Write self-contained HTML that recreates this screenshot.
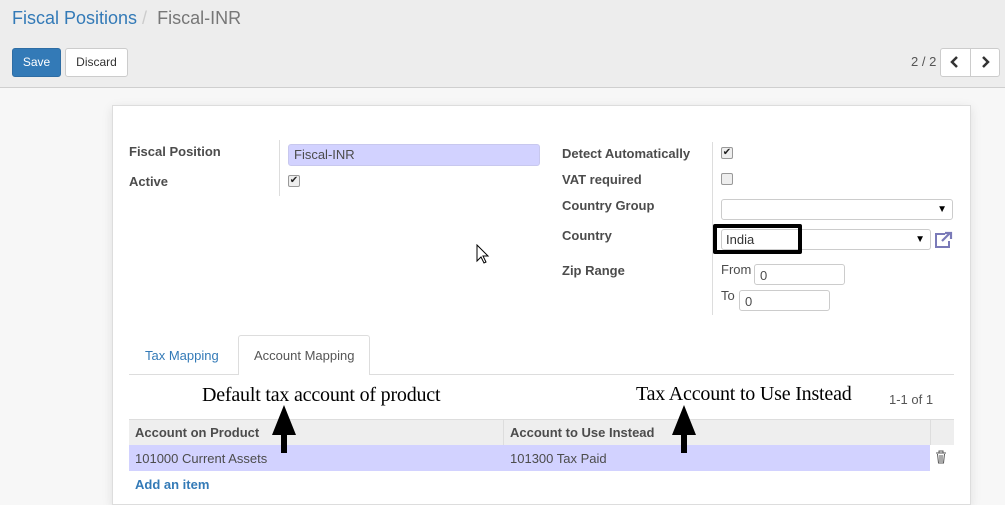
<!DOCTYPE html>
<html><head><meta charset="utf-8"><style>
*{box-sizing:border-box;margin:0;padding:0}
body{width:1005px;height:497px;overflow:hidden;background:#f7f7f7;font-family:"Liberation Sans",sans-serif;font-size:13px;color:#4c4c4c;position:relative}
.a{position:absolute}
.top{left:0;top:0;width:1005px;height:88px;background:#ededed;border-bottom:1px solid #cfcfcf}
.btn{position:absolute;height:29px;border-radius:3px;font-size:12px;line-height:27px;text-align:center}
.sheet{left:112px;top:105px;width:859px;height:400px;background:#fff;border:1px solid #ddd;box-shadow:0 3px 10px rgba(0,0,0,.1)}
.lbl{position:absolute;font-weight:bold;font-size:13px;color:#4c4c4c}
.cb{position:absolute;width:12px;height:12px;border:1px solid #999;border-radius:2px;background:#eee;font-size:10px;line-height:10px;text-align:center;color:#222}
.inp{position:absolute;border:1px solid #ccc;border-radius:3px;background:#fff;font-size:13px;padding-left:5px}
.serif{position:absolute;font-family:"Liberation Serif",serif;font-size:20px;color:#000;letter-spacing:-0.2px}
</style></head><body>
<div class="a top"></div>
<div class="a" style="left:12px;top:8px;font-size:18px;color:#337ab7">Fiscal Positions <span style="color:#ccc">/</span> <span style="color:#777">&nbsp;Fiscal-INR</span></div>
<div class="btn" style="left:12px;top:48px;width:49px;background:#337ab7;color:#fff;border:1px solid #2e6da4">Save</div>
<div class="btn" style="left:65px;top:48px;width:63px;background:#fff;color:#333;border:1px solid #ccc">Discard</div>
<div class="a" style="left:911px;top:54px;font-size:13px;color:#555">2 / 2</div>
<div class="btn" style="left:940px;top:48px;width:60px;height:29px;background:#fff;border:1px solid #ccc"></div>
<div class="a" style="left:970px;top:48px;width:1px;height:29px;background:#ccc"></div>
<svg class="a" style="left:950px;top:56px" width="10" height="12"><path d="M7 1L2 6l5 5" fill="none" stroke="#333" stroke-width="2.5"/></svg>
<svg class="a" style="left:980px;top:56px" width="10" height="12"><path d="M3 1l5 5-5 5" fill="none" stroke="#333" stroke-width="2.5"/></svg>

<div class="a sheet"></div>
<div class="lbl" style="left:129px;top:144px">Fiscal Position</div>
<div class="lbl" style="left:129px;top:174px">Active</div>
<div class="a" style="left:279px;top:140px;width:1px;height:56px;background:#ddd"></div>
<div class="inp" style="left:288px;top:144px;width:252px;height:22px;background:#d2d2ff;border-color:#c8c8ee;line-height:20px">Fiscal-INR</div>
<div class="cb" style="left:288px;top:175px">✔</div>

<div class="lbl" style="left:562px;top:146px">Detect Automatically</div>
<div class="lbl" style="left:562px;top:172px">VAT required</div>
<div class="lbl" style="left:562px;top:198px">Country Group</div>
<div class="lbl" style="left:562px;top:228px">Country</div>
<div class="lbl" style="left:562px;top:263px">Zip Range</div>
<div class="a" style="left:712px;top:142px;width:1px;height:173px;background:#ddd"></div>
<div class="cb" style="left:721px;top:147px">✔</div>
<div class="cb" style="left:721px;top:173px"></div>
<div class="inp" style="left:721px;top:199px;width:232px;height:21px"><span style="position:absolute;right:5px;top:4px;font-size:10px;color:#000">▼</span></div>
<div class="inp" style="left:721px;top:229px;width:210px;height:21px"><span style="position:absolute;right:5px;top:4px;font-size:10px;color:#000">▼</span></div>
<div class="a" style="left:713px;top:224px;width:89px;height:30px;border:4px solid #000;border-radius:2px"></div>
<div class="a" style="left:726px;top:232px;font-size:13px;color:#333">India</div>
<svg class="a" style="left:933px;top:231px" width="20" height="18" viewBox="0 0 20 18"><path d="M12 3H3v13h13v-6" fill="none" stroke="#7a7ab8" stroke-width="2"/><path d="M9 10l8-8M12 2h6v6" fill="none" stroke="#7a7ab8" stroke-width="2.2"/></svg>
<div class="a" style="left:721px;top:262px;font-size:13px">From</div>
<div class="inp" style="left:754px;top:264px;width:91px;height:21px;line-height:21px">0</div>
<div class="a" style="left:721px;top:288px;font-size:13px">To</div>
<div class="inp" style="left:739px;top:290px;width:91px;height:21px;line-height:21px">0</div>

<div class="a" style="left:129px;top:374px;width:825px;height:1px;background:#ddd"></div>
<div class="a" style="left:238px;top:335px;width:132px;height:40px;background:#fff;border:1px solid #ddd;border-bottom:none;border-radius:3px 3px 0 0"></div>
<div class="a" style="left:145px;top:348px;font-size:13px;color:#337ab7">Tax Mapping</div>
<div class="a" style="left:254px;top:348px;font-size:13px;color:#555">Account Mapping</div>

<div class="serif" style="left:202px;top:384px">Default tax account of product</div>
<div class="serif" style="left:636px;top:383px">Tax Account to Use Instead</div>
<div class="a" style="left:889px;top:392px;font-size:13px;color:#555">1-1 of 1</div>

<div class="a" style="left:129px;top:419px;width:825px;height:26px;background:#eee;border-top:1px solid #ddd"></div>
<div class="a" style="left:503px;top:419px;width:1px;height:26px;background:#ddd"></div>
<div class="a" style="left:930px;top:419px;width:1px;height:26px;background:#ddd"></div>
<div class="lbl" style="left:135px;top:425px">Account on Product</div>
<div class="lbl" style="left:510px;top:425px">Account to Use Instead</div>
<div class="a" style="left:129px;top:445px;width:801px;height:26px;background:#d2d2ff"></div>
<div class="a" style="left:135px;top:451px;font-size:13px">101000 Current Assets</div>
<div class="a" style="left:510px;top:451px;font-size:13px">101300 Tax Paid</div>
<svg class="a" style="left:935px;top:450px" width="12" height="14"><path d="M1 3h10M4 3V1h4v2M2.5 4l1 9h5l1-9M5 5v7M7 5v7" fill="none" stroke="#555" stroke-width="1"/></svg>
<div class="a" style="left:135px;top:477px;font-size:13px;font-weight:bold;color:#337ab7">Add an item</div>

<svg class="a" style="left:271px;top:405px" width="26" height="48"><path d="M13 0L1 30h9v18h6V30h9z" fill="#000"/></svg>
<svg class="a" style="left:671px;top:405px" width="26" height="48"><path d="M13 0L1 30h9v18h6V30h9z" fill="#000"/></svg>
<svg class="a" style="left:476px;top:244px" width="14" height="20"><path d="M1 1v16l4-4 3 6 2-1-3-6h5z" fill="#fff" stroke="#000"/></svg>
</body></html>
